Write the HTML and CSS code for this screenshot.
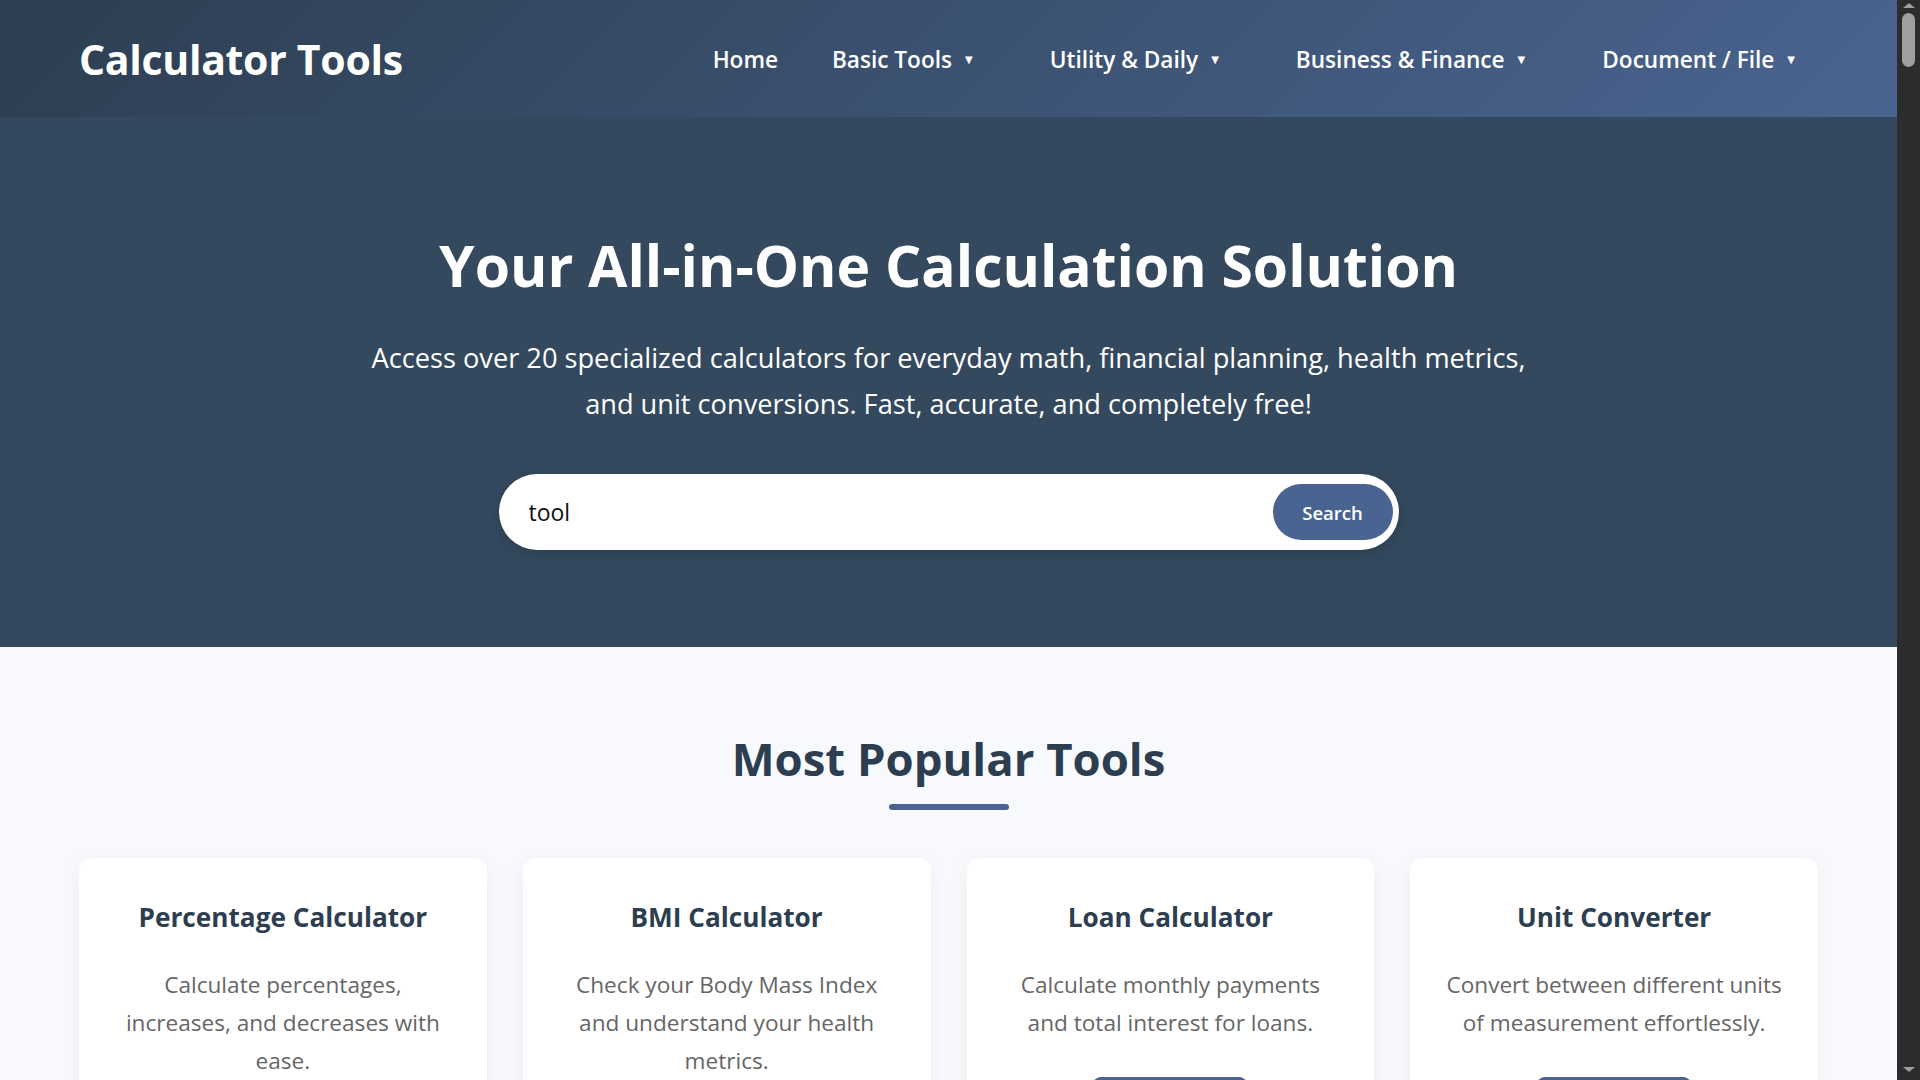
FILE: index.html
```html
<!DOCTYPE html>
<html lang="en">
<head>
<meta charset="utf-8">
<title>Calculator Tools</title>
<link rel="stylesheet" href="styles.css">
</head>
<body>
<header class="site-header">
  <div class="header-inner">
    <a class="logo" href="#">Calculator Tools</a>
    <nav class="main-nav">
      <ul class="nav-list">
        <li class="nav-item"><a class="nav-link" href="#">Home</a></li>
        <li class="nav-item dropdown"><a class="nav-link" href="#">Basic Tools<span class="caret">▼</span></a></li>
        <li class="nav-item dropdown"><a class="nav-link" href="#">Utility &amp; Daily<span class="caret">▼</span></a></li>
        <li class="nav-item dropdown"><a class="nav-link" href="#">Business &amp; Finance<span class="caret">▼</span></a></li>
        <li class="nav-item dropdown"><a class="nav-link" href="#">Document / File<span class="caret">▼</span></a></li>
      </ul>
    </nav>
  </div>
</header>

<section class="hero">
  <h1 class="hero-title">Your All-in-One Calculation Solution</h1>
  <p class="hero-text">Access over 20 specialized calculators for everyday math, financial planning, health metrics, and unit conversions. Fast, accurate, and completely free!</p>
  <form class="search-box" onsubmit="return false;">
    <input class="search-input" type="text" value="tool" aria-label="Search tools">
    <button class="search-btn" type="submit">Search</button>
  </form>
</section>

<section class="popular">
  <h2 class="section-title">Most Popular Tools</h2>
  <div class="tool-grid">
    <article class="tool-card">
      <h3 class="card-title">Percentage Calculator</h3>
      <p class="card-text">Calculate percentages, increases, and decreases with ease.</p>
      <a class="card-btn" href="#">Use Calculator</a>
    </article>
    <article class="tool-card">
      <h3 class="card-title">BMI Calculator</h3>
      <p class="card-text">Check your Body Mass Index and understand your health metrics.</p>
      <a class="card-btn" href="#">Use Calculator</a>
    </article>
    <article class="tool-card">
      <h3 class="card-title">Loan Calculator</h3>
      <p class="card-text">Calculate monthly payments and total interest for loans.</p>
      <a class="card-btn" href="#">Use Calculator</a>
    </article>
    <article class="tool-card">
      <h3 class="card-title">Unit Converter</h3>
      <p class="card-text">Convert between different units of measurement effortlessly.</p>
      <a class="card-btn" href="#">Use Converter</a>
    </article>
  </div>
</section>

<footer class="site-footer">
  <p>&copy; Calculator Tools. All rights reserved.</p>
</footer>

<div class="fake-scrollbar" aria-hidden="true">
  <span class="sb-arrow sb-up"></span>
  <span class="sb-thumb"></span>
  <span class="sb-arrow sb-down"></span>
</div>
</body>
</html>
```
FILE: styles.css
```css
* { box-sizing: border-box; }

html {
  margin: 0;
  padding: 0;
  background: #2c2c2c;
}

body {
  margin: 0 23px 0 0;
  padding: 0;
  font-family: "Open Sans", "Noto Sans", sans-serif;
  background: #f7f9fc;
  color: #333;
}

/* Browser scrollbar look-alike (overlay at the right edge) */
.fake-scrollbar {
  position: fixed;
  top: 0;
  right: 0;
  width: 23px;
  height: 100vh;
  background: #2c2c2c;
  display: flex;
  flex-direction: column;
  align-items: center;
}
.sb-arrow {
  display: block;
  width: 0;
  height: 0;
  border-left: 6px solid transparent;
  border-right: 6px solid transparent;
}
.sb-up {
  margin-top: 3px;
  border-bottom: 5px solid #9f9f9f;
}
.sb-down {
  margin-top: auto;
  margin-bottom: 8px;
  border-top: 5px solid #9f9f9f;
}
.sb-thumb {
  display: block;
  width: 13px;
  height: 54px;
  margin-top: 5px;
  border-radius: 7px;
  background: #9f9f9f;
}

/* Header */
.site-header {
  background: linear-gradient(135deg, #2c3e50 0%, #4a6491 100%);
  height: 117px;
}
.header-inner {
  height: 100%;
  padding: 2px 79px 0;
  display: flex;
  align-items: center;
  justify-content: space-between;
}
.logo {
  color: #fff;
  text-decoration: none;
  font-weight: 700;
  font-size: 41px;
  line-height: 1;
  letter-spacing: -0.3px;
}
.nav-list {
  list-style: none;
  margin: 0;
  padding: 0;
  display: flex;
  align-items: center;
  gap: 54px;
}
.nav-item.dropdown { padding-right: 23px; }
.nav-link {
  color: #fff;
  text-decoration: none;
  font-weight: 600;
  font-size: 22.6px;
  display: flex;
  align-items: center;
}
.caret {
  font-family: "DejaVu Sans", sans-serif;
  font-size: 10px;
  margin-left: 13px;
  line-height: 1;
}

/* Hero */
.hero {
  background: #34495e;
  color: #fff;
  text-align: center;
  padding: 115px 20px 97px;
}
.hero-title {
  margin: 0;
  font-size: 57px;
  line-height: 66px;
  font-weight: 700;
}
.hero-text {
  margin: 37px auto 0;
  max-width: 1180px;
  font-size: 27.2px;
  line-height: 46px;
}
.search-box {
  margin: 47px auto 0;
  width: 900px;
  height: 76px;
  background: #fff;
  border-radius: 40px;
  display: flex;
  align-items: center;
  padding: 0 6px 0 30px;
  box-shadow: 0 4px 14px rgba(0, 0, 0, 0.15);
}
.search-input {
  flex: 1;
  border: none;
  outline: none;
  background: transparent;
  font-family: inherit;
  font-size: 23px;
  color: #111;
  padding: 0;
}
.search-btn {
  width: 120px;
  height: 56px;
  border: none;
  border-radius: 28px;
  background: #4a6491;
  color: #fff;
  font-family: inherit;
  font-weight: 600;
  font-size: 18.5px;
  cursor: pointer;
}

/* Popular */
.popular {
  padding: 85px 79px 90px;
  background: #f7f9fc;
}
.section-title {
  margin: 0;
  text-align: center;
  color: #2c3e50;
  font-size: 45.5px;
  line-height: 53px;
  font-weight: 700;
}
.section-title::after {
  content: "";
  display: block;
  width: 120px;
  height: 6px;
  border-radius: 3px;
  background: #4a6491;
  margin: 19px auto 0;
}
.tool-grid {
  margin-top: 48px;
  display: grid;
  grid-template-columns: repeat(4, 1fr);
  gap: 36px;
}
.tool-card {
  background: #fff;
  border-radius: 13px;
  box-shadow: 0 5px 20px rgba(0, 0, 0, 0.05);
  padding: 42px 34px 40px;
  text-align: center;
}
.card-title {
  margin: 0 0 32px;
  color: #2c3e50;
  font-size: 26.2px;
  line-height: 34px;
  font-weight: 700;
}
.card-text {
  margin: 0 0 35px;
  color: #666;
  font-size: 22.6px;
  line-height: 38px;
}
.card-btn {
  display: inline-block;
  width: 154px;
  padding: 13px 0;
  border-radius: 8px;
  background: #4a6491;
  color: #fff;
  text-decoration: none;
  font-weight: 600;
  font-size: 17px;
}

.site-footer {
  background: #2c3e50;
  color: #cfd8e3;
  text-align: center;
  padding: 40px 20px;
  font-size: 16px;
}
.site-footer p { margin: 0; }
```
